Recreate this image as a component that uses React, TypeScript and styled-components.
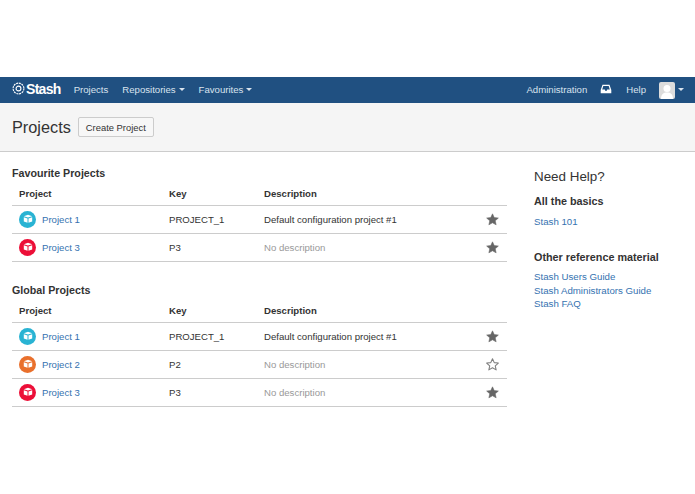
import React from 'react';
import styled, { createGlobalStyle } from 'styled-components';

const GlobalStyle = createGlobalStyle`
  html, body { margin: 0; padding: 0; background: #fff; }
  body {
    font-family: "Liberation Sans", Arial, sans-serif;
    font-size: 9.6px;
    color: #333;
  }
`;

const Page = styled.div`
  width: 695px;
  height: 494px;
  overflow: hidden;
  padding-top: 77px;
  box-sizing: border-box;
`;

const TopBar = styled.header`
  height: 26px;
  background: #205081;
  display: flex;
  align-items: center;
  padding: 0 11px 2px 12px;
  color: #d9e3ee;
  box-sizing: border-box;
`;

const Logo = styled.div`
  display: flex;
  align-items: center;
  gap: 1px;
  color: #fff;
  font-weight: 700;
  font-size: 14px;
  letter-spacing: -0.7px;
  margin-right: 13px;
  margin-top: -1px;
`;

const NavLink = styled.a`
  display: flex;
  align-items: center;
  gap: 3px;
  margin-right: ${(p: { $gap?: number }) => p.$gap ?? 14}px;
  white-space: nowrap;
`;

const Caret = styled.span`
  display: inline-block;
  border-left: 3px solid transparent;
  border-right: 3px solid transparent;
  border-top: 3px solid #d9e3ee;
`;

const Spacer = styled.div`
  flex: 1;
`;

const Avatar = styled.div`
  width: 16px;
  height: 17px;
  border-radius: 2px;
  background: #dcdcdc;
  overflow: hidden;
  margin: 2px 3px 0 0;
  display: flex;
`;

const PageHeader = styled.div`
  height: 49px;
  box-sizing: border-box;
  background: #f5f5f5;
  border-bottom: 1px solid #ccc;
  display: flex;
  align-items: center;
  gap: 7px;
  padding-left: 12px;
`;

const Title = styled.h1`
  margin: 0;
  font-weight: 400;
  font-size: 16.3px;
  color: #333;
`;

const Button = styled.button`
  height: 20px;
  padding: 0 7px;
  border: 1px solid #ccc;
  border-radius: 2px;
  background: #f7f7f7;
  font: inherit;
  font-size: 9.4px;
  color: #333;
`;

const Content = styled.main`
  display: flex;
  padding: 15px 0 0 12px;
`;

const MainColumn = styled.div`
  width: 495px;
  margin-right: 27px;
`;

const SideColumn = styled.aside`
  flex: 1;
  padding-top: 1px;
`;

const SectionTitle = styled.h2`
  margin: 0;
  font-size: 10.7px;
  line-height: 13px;
  font-weight: 700;
`;

const Section = styled.section`
  margin-bottom: 22px;
`;

const Table = styled.table`
  width: 100%;
  margin-top: 1px;
  border-collapse: collapse;
  table-layout: fixed;
`;

const HeadCell = styled.th`
  height: 24px;
  padding: 0 0 0 ${(p: { $pad?: number }) => p.$pad ?? 0}px;
  text-align: left;
  font-weight: 700;
  font-size: 9.6px;
  border-bottom: 1px solid #ccc;
`;

const Cell = styled.td`
  height: 28px;
  padding: 0 0 1px;
  box-sizing: border-box;
  border-bottom: 1px solid #ccc;
  color: ${(p: { $muted?: boolean }) => (p.$muted ? '#999' : '#333')};
`;

const StarCell = styled(Cell)`
  text-align: center;
  line-height: 0;
`;

const ProjectCell = styled.div`
  display: flex;
  align-items: center;
  gap: 6px;
  padding-left: 7px;
`;

const Badge = styled.span<{ $color: string }>`
  width: 17px;
  height: 17px;
  border-radius: 50%;
  background: ${(p) => p.$color};
  display: flex;
  align-items: center;
  justify-content: center;
`;

const Link = styled.a`
  color: #3572b0;
  white-space: nowrap;
`;

const HelpTitle = styled.h3`
  margin: 0 0 8px;
  font-weight: 400;
  font-size: 13.4px;
  line-height: 18px;
  color: #333;
`;

const HelpHeading = styled.h4`
  margin: 0 0 6.5px;
  font-size: 10.8px;
  line-height: 14px;
  font-weight: 700;
`;

const HelpLinks = styled.div`
  display: flex;
  flex-direction: column;
  margin-bottom: 21.5px;
  font-size: 9.7px;
  line-height: 13.6px;
`;

const Star = ({ filled }: { filled: boolean }) => (
  <svg width="13" height="13" viewBox="0 0 24 24">
    <path
      d="M12 1.5l3.2 7 7.6.8-5.7 5.1 1.6 7.5L12 18.1l-6.7 3.8 1.6-7.5L1.200 9.300l7.600-.8z"
      fill={filled ? '#666' : 'none'}
      stroke={filled ? '#666' : '#808080'}
      strokeWidth={filled ? 1 : 2}
      strokeLinejoin="round"
    />
  </svg>
);

const BoxIcon = () => (
  <svg width="10" height="10" viewBox="0 0 10 10">
    <path d="M0.800 2.200L5 0.800l4.200 1.400L5 3.600z" fill="#fff" />
    <path d="M0.800 3.200L4.500 4.500v4.300L0.800 7.500zM9.200 3.200L5.500 4.500v4.300l3.700-1.300z" fill="#fff" />
  </svg>
);

const LogoMark = () => (
  <svg width="13" height="13" viewBox="0 0 14 14" fill="none" stroke="#fff">
    <circle cx="7" cy="7" r="5.800" strokeWidth="1.200" strokeDasharray="2.200 0.800" />
    <circle cx="7" cy="7" r="2.600" strokeWidth="1.200" />
  </svg>
);

const InboxIcon = () => (
  <svg width="12" height="10" viewBox="0 0 12 10">
    <path
      d="M2.500 0.800h7L11.300 6v3.200H0.700V6zM3.300 2L2.200 5.500h2.600L5.500 7h1l.7-1.500h2.600L8.700 2z"
      fill="#fff"
      fillRule="evenodd"
    />
  </svg>
);

const AvatarIcon = () => (
  <svg width="16" height="17" viewBox="0 0 16 17">
    <circle cx="8" cy="6.500" r="3.500" fill="#fff" />
    <path d="M2 17c0-5 2.500-6.500 6-6.500s6 1.500 6 6.500z" fill="#fff" />
  </svg>
);

type Row = {
  name: string;
  key: string;
  description: string;
  color: string;
  starred: boolean;
};

const BLUE = '#29b3d3';
const ORANGE = '#e9702c';
const RED = '#ec0f38';

const favourites: Row[] = [
  { name: 'Project 1', key: 'PROJECT_1', description: 'Default configuration project #1', color: BLUE, starred: true },
  { name: 'Project 3', key: 'P3', description: '', color: RED, starred: true },
];

const globals: Row[] = [
  { name: 'Project 1', key: 'PROJECT_1', description: 'Default configuration project #1', color: BLUE, starred: true },
  { name: 'Project 2', key: 'P2', description: '', color: ORANGE, starred: false },
  { name: 'Project 3', key: 'P3', description: '', color: RED, starred: true },
];

const ProjectTable = ({ rows }: { rows: Row[] }) => (
  <Table>
    <colgroup>
      <col style={{ width: 157 }} />
      <col style={{ width: 95 }} />
      <col />
      <col style={{ width: 30 }} />
    </colgroup>
    <thead>
      <tr>
        <HeadCell $pad={7}>Project</HeadCell>
        <HeadCell>Key</HeadCell>
        <HeadCell>Description</HeadCell>
        <HeadCell />
      </tr>
    </thead>
    <tbody>
      {rows.map((row) => (
        <tr key={row.name}>
          <Cell>
            <ProjectCell>
              <Badge $color={row.color}>
                <BoxIcon />
              </Badge>
              <Link>{row.name}</Link>
            </ProjectCell>
          </Cell>
          <Cell>{row.key}</Cell>
          <Cell $muted={!row.description}>{row.description || 'No description'}</Cell>
          <StarCell>
            <Star filled={row.starred} />
          </StarCell>
        </tr>
      ))}
    </tbody>
  </Table>
);

export default function App() {
  return (
    <Page>
      <GlobalStyle />
      <TopBar>
        <Logo>
          <LogoMark />
          Stash
        </Logo>
        <NavLink>Projects</NavLink>
        <NavLink>
          Repositories <Caret />
        </NavLink>
        <NavLink>
          Favourites <Caret />
        </NavLink>
        <Spacer />
        <NavLink $gap={13}>Administration</NavLink>
        <NavLink>
          <InboxIcon />
        </NavLink>
        <NavLink $gap={13}>Help</NavLink>
        <Avatar>
          <AvatarIcon />
        </Avatar>
        <Caret />
      </TopBar>
      <PageHeader>
        <Title>Projects</Title>
        <Button>Create Project</Button>
      </PageHeader>
      <Content>
        <MainColumn>
          <Section>
            <SectionTitle>Favourite Projects</SectionTitle>
            <ProjectTable rows={favourites} />
          </Section>
          <Section>
            <SectionTitle>Global Projects</SectionTitle>
            <ProjectTable rows={globals} />
          </Section>
        </MainColumn>
        <SideColumn>
          <HelpTitle>Need Help?</HelpTitle>
          <HelpHeading>All the basics</HelpHeading>
          <HelpLinks>
            <Link>Stash 101</Link>
          </HelpLinks>
          <HelpHeading>Other reference material</HelpHeading>
          <HelpLinks>
            <Link>Stash Users Guide</Link>
            <Link>Stash Administrators Guide</Link>
            <Link>Stash FAQ</Link>
          </HelpLinks>
        </SideColumn>
      </Content>
    </Page>
  );
}
